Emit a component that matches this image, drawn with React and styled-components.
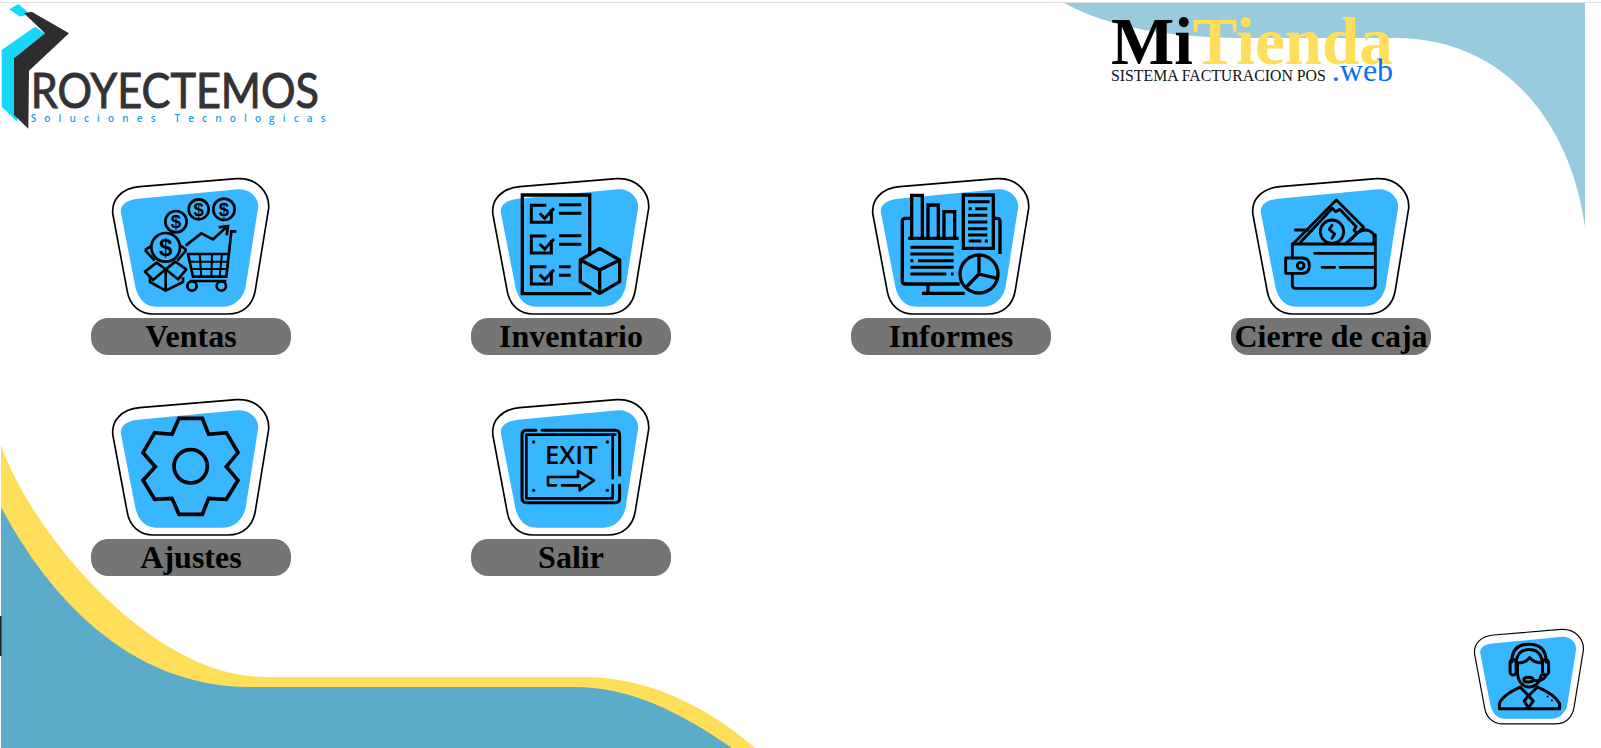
import React from 'react';
import styled, { createGlobalStyle } from 'styled-components';

const Global = createGlobalStyle`
  html, body { margin: 0; padding: 0; background: #fff; }
  body { font-family: "Liberation Serif", serif; overflow: hidden; }
`;

const Page = styled.div`
  position: relative;
  width: 1601px;
  height: 748px;
  overflow: hidden;
  padding-top: 2px;
  box-sizing: border-box;
  background: #fff;
`;
const TopRule = styled.div`
  position: relative;
  height: 1px;
  background: #dedede;
`;
const Backdrop = styled.svg`
  position: absolute;
  inset: 0;
  width: 1601px;
  height: 748px;
`;
const Header = styled.header`
  position: relative;
  display: flex;
  justify-content: space-between;
  align-items: flex-start;
  height: 174px;
  padding-right: 220px;
`;
const CompanyLogo = styled.svg`
  display: block;
  width: 340px;
  height: 140px;
`;
const Brand = styled.div`
  width: 270px;
  padding-top: 5px;
`;
const BrandTitle = styled.div`
  font-size: 67px;
  line-height: 66px;
  font-weight: 700;
  color: #000;
  white-space: nowrap;
`;
const BrandAccent = styled.span`
  color: #ffde59;
`;
const BrandRow = styled.div`
  display: flex;
  align-items: baseline;
  gap: 6px;
  margin-top: -12px;
  white-space: nowrap;
  line-height: 16px;
`;
const BrandCaption = styled.span`
  font-size: 15.8px;
  color: #111;
`;
const BrandDomain = styled.span`
  font-size: 32px;
  color: #0d6efd;
`;
const MenuGrid = styled.main`
  position: relative;
  display: grid;
  grid-template-columns: repeat(4, 380px);
  row-gap: 43px;
  margin-left: 1px;
`;
const MenuCard = styled.a`
  display: flex;
  flex-direction: column;
  align-items: center;
  gap: 1px;
  cursor: pointer;
`;
const Frame = styled.svg`
  display: block;
  width: 163.33px;
  height: 140px;
`;
const Label = styled.div`
  width: 200px;
  height: 37px;
  border-radius: 17px;
  background: #757575;
  color: #000;
  font-size: 32px;
  font-weight: 700;
  line-height: 37px;
  text-align: center;
  white-space: nowrap;
`;
const SupportButton = styled.a`
  position: absolute;
  right: 15px;
  bottom: 22px;
  display: block;
  width: 114px;
  height: 98px;
  cursor: pointer;
`;
const SupportFrame = styled.svg`
  display: block;
  width: 114px;
  height: 98px;
`;
const Ink = styled.g`
  fill: none;
  stroke: #000;
  stroke-width: ${p => p.$w || 9}px;
  stroke-linecap: ${p => p.$cap || 'butt'};
  stroke-linejoin: ${p => p.$join || 'miter'};
`;
const Coin = styled.text`
  fill: #000;
  stroke: none;
  font-family: "Liberation Sans", sans-serif;
  font-weight: 700;
  text-anchor: middle;
`;
const ExitText = styled.text`
  fill: #000;
  stroke: none;
  font-family: "Open Sans", sans-serif;
  font-weight: 600;
  font-size: 77px;
`;

const OUTER = 'M85 135 C78 90 110 55 165 50 L455 26 C520 22 555 70 552 115 L512 360 C505 405 475 432 430 432 L205 432 C165 432 135 405 128 365 Z';
const INNER = 'M109 130 C105 105 125 90 160 86 L460 58 C495 55 525 85 520 115 L483 350 C475 385 450 410 415 410 L215 410 C180 410 160 385 152 350 Z';

const Plate = () => (
  <>
    <path d={OUTER} fill="#fff" stroke="#000" strokeWidth="5" />
    <path d={INNER} fill="#38b6ff" />
  </>
);

const CoinMark = ({ x, y, r, s }) => (
  <>
    <circle cx={x} cy={y} r={r} fill="#38b6ff" />
    <Coin x={x} y={y + s * 0.36} fontSize={s}>$</Coin>
  </>
);

const VentasIcon = () => (
  <>
    <Ink $w={8}>
      <CoinMark x={274} y={155} r={32} s={56} />
      <CoinMark x={342} y={118} r={30} s={56} />
      <CoinMark x={418} y={118} r={32} s={56} />
      <polyline points="303,227 350,190 385,208 425,172" />
      <polyline points="402,172 430,168 426,196" />
      <polyline points="455,184 440,184 425,320 325,320 310,252 430,252" />
      <path d="M315 333 H425" />
      <circle cx="322" cy="348" r="14" />
      <circle cx="410" cy="348" r="14" />
    </Ink>
    <Ink $w={6}>
      <path d="M345 252 L350 320 M382 252 L380 320 M412 252 L405 320 M315 275 H428 M320 297 H424" />
    </Ink>
    <Ink $w={8} $join="round">
      <path d="M196 322 V336 L243 362 L295 336 V322" />
      <path d="M243 362 V300" />
      <path d="M181 305 L216 278 L243 298 L205 330 Z" />
      <path d="M305 298 L272 275 L243 298 L280 328 Z" />
      <path d="M181 240 L205 225 M181 240 L210 272 M305 240 L285 225 M305 240 L278 272" />
      <CoinMark x={243} y={232} r={43} s={72} />
    </Ink>
  </>
);

const InventarioIcon = () => (
  <>
    <Ink $w={10}>
      <polyline points="375,256 375,75 173,75 173,371 380,371" />
    </Ink>
    <Ink $w={9}>
      <path d="M260 118 V157 H200 V106 H245" />
      <path d="M260 210 V249 H200 V198 H245" />
      <path d="M260 302 V342 H200 V290 H245" />
      <path d="M283 104 H350 M283 130 H350 M283 197 H350 M283 223 H350 M283 290 H318 M283 316 H318" />
      <path d="M225 130 L240 145 L268 115 M225 222 L240 237 L268 207 M225 314 L240 329 L268 299" />
    </Ink>
    <Ink $w={10} $join="round">
      <path d="M405 235 L465 270 V335 L405 370 L347 335 V270 Z" />
      <path d="M347 270 L405 300 L465 270 M405 300 V370" />
    </Ink>
  </>
);

const InformesIcon = () => (
  <>
    <Ink $w={10}>
      <path d="M200 145 H182 Q173 145 173 154 V332 Q173 342 182 342 H345" />
      <path d="M445 145 H458 Q466 145 466 154 V252" />
      <path d="M250 342 V370 M232 370 H360" />
      <path d="M201 205 V76 H233 V205 M250 205 V105 H281 V205 M298 205 V125 H330 V205 M190 205 H342" />
      <path d="M356 75 H446 V235 H356 Z" />
    </Ink>
    <Ink $w={9}>
      <path d="M197 232 H327 M197 252 H327 M197 272 H206 M220 272 H327 M197 292 H327 M197 312 H305 M319 312 H327" />
      <path d="M370 95 H435 M372 116 H381 M392 116 H428 M370 136 H428 M370 156 H428 M370 176 H428 M370 195 H428 M372 213 H410 M420 213 H430" />
    </Ink>
    <Ink $w={10}>
      <circle cx="403" cy="312" r="57" />
      <path d="M403 255 V312 L460 326 M403 312 L362 354" />
    </Ink>
  </>
);

const CierreIcon = () => (
  <Ink $w={8.5} $join="round" $cap="round">
    <path d="M205 222 L335 90 L417 172 L362 222" />
    <path d="M225 220 L323 115 L333 125 L345 118 L395 170 L388 180 L396 190 L378 210" />
    <path d="M212 180 H250" />
    <circle cx="322" cy="185" r="35" />
    <path d="M322 166 L314 178 L330 192 L322 205" />
    <path d="M203 264 V222 H445 M396 190 Q425 170 445 190 Q452 205 445 222 M452 195 V345 Q452 355 442 355 H213 Q203 355 203 345 V310" />
    <path d="M203 264 H183 V310 H232 Q254 310 254 287 Q254 264 232 264 H203" />
    <circle cx="228" cy="287" r="10" />
    <path d="M270 250 H445 M292 292 H330 M346 292 H445" />
  </Ink>
);

const AjustesIcon = () => (
  <Ink $w={11}>
    <polygon points="283,82 353,82 372,130 425,125 460,185 425,227 460,268 425,325 372,322 353,370 283,370 262,322 210,325 175,268 212,227 175,185 210,125 262,130" />
    <circle cx="318" cy="226" r="50" />
  </Ink>
);

const SalirIcon = () => (
  <>
    <Ink $w={9} $cap="round" $join="round">
      <path d="M214 118 H186 Q172 118 172 132 V322 Q172 335 186 335 H451 Q465 335 465 322 V282" />
      <path d="M465 252 V132 Q465 118 451 118 H232" />
    </Ink>
    <Ink $w={8} $cap="round" $join="round">
      <path d="M185 131 H452 M444 131 V262 M444 282 V322 H185 V131" />
      <path d="M274 283 H250 V258 H340 V240 L388 268 L345 298 V283 H292" />
    </Ink>
    <ExitText x="241" y="218" textLength="158" lengthAdjust="spacingAndGlyphs">EXIT</ExitText>
    <circle cx="207" cy="153" r="5" />
    <circle cx="428" cy="153" r="5" />
    <circle cx="207" cy="298" r="5" />
    <circle cx="428" cy="298" r="5" />
  </>
);

const items = [
  { label: 'Ventas', Icon: VentasIcon },
  { label: 'Inventario', Icon: InventarioIcon },
  { label: 'Informes', Icon: InformesIcon },
  { label: 'Cierre de caja', Icon: CierreIcon },
  { label: 'Ajustes', Icon: AjustesIcon },
  { label: 'Salir', Icon: SalirIcon },
];

export default function App() {
  return (
    <Page>
      <Global />
      <Backdrop viewBox="0 0 1601 748">
        <path d="M1064 3 H1585 V227 C1572 130 1510 38 1395 38 H1250 C1170 38 1110 28 1064 3 Z" fill="#99cbdf" />
        <path d="M1 445 C30 530 150 677 265 677 H583 C640 677 700 700 755 748 H1 Z" fill="#ffde59" />
        <path d="M1 507 C45 590 125 687 250 687 H575 C630 687 680 712 732 748 H1 Z" fill="#5bacc9" />
        <rect x="0" y="616" width="1.5" height="40" fill="#222" />
      </Backdrop>
      <TopRule />
      <Header>
        <CompanyLogo viewBox="0 9 1020 420">
          <polygon points="28,28 55,12 90,42 60,50" fill="#17d8fa" />
          <polygon points="5,150 105,80 135,100 42,175 52,365 5,320" fill="#17d8fa" />
          <polygon points="72,40 95,35 207,100 87,212 85,386 42,345 42,175 135,100" fill="#2d2d2f" />
          <text x="92" y="325" fontFamily="Lato, sans-serif" fontSize="146" fill="#333336" stroke="#333336" strokeWidth="3" textLength="865" lengthAdjust="spacingAndGlyphs">ROYECTEMOS</text>
          <text x="92" y="366" fontFamily="'Open Sans', sans-serif" fontWeight="600" fontSize="30" fill="#1f9fe6" textLength="885" lengthAdjust="spacing">Soluciones Tecnologicas</text>
        </CompanyLogo>
        <Brand>
          <BrandTitle>Mi<BrandAccent>Tienda</BrandAccent></BrandTitle>
          <BrandRow>
            <BrandCaption>SISTEMA FACTURACION POS</BrandCaption>
            <BrandDomain>.web</BrandDomain>
          </BrandRow>
        </Brand>
      </Header>
      <MenuGrid>
        {items.map(({ label, Icon }) => (
          <MenuCard key={label}>
            <Frame viewBox="73 21 490 420">
              <Plate />
              <Icon />
            </Frame>
            <Label>{label}</Label>
          </MenuCard>
        ))}
      </MenuGrid>
      <SupportButton>
        <SupportFrame viewBox="36 24 341 292">
          <g transform="translate(-15 9.6) scale(.696)">
            <Plate />
          </g>
          <Ink $w={9} $cap="round" $join="round">
            <path d="M155 125 Q155 72 206 72 Q258 72 258 125" />
            <path d="M168 125 Q172 88 206 88 Q242 88 246 125" />
            <rect x="150" y="118" width="18" height="46" rx="9" />
            <rect x="247" y="118" width="18" height="46" rx="9" />
            <path d="M170 128 Q195 130 208 112 Q222 128 245 128" />
            <path d="M172 130 V160 Q176 198 207 200 Q236 198 243 165" />
            <path d="M257 164 Q252 185 218 180" />
            <ellipse cx="205" cy="178" rx="14" ry="7" />
            <path d="M118 265 V250 Q125 225 180 200 L205 226 L232 200 Q285 222 298 250 V265 Z" />
            <path d="M205 226 L192 242 L205 262 L219 242 Z" />
          </Ink>
          <circle cx="262" cy="228" r="3" />
          <circle cx="275" cy="240" r="3" />
        </SupportFrame>
      </SupportButton>
    </Page>
  );
}
